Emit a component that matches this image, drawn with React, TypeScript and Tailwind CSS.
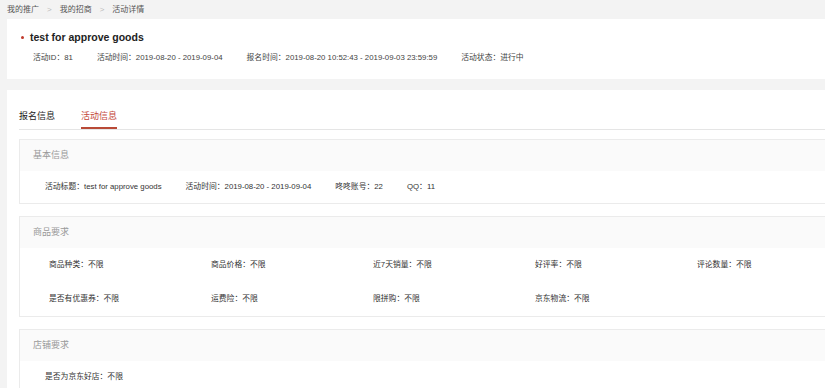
import React from 'react';

const meta = [
  { label: '活动ID', value: '81' },
  { label: '活动时间', value: '2019-08-20 - 2019-09-04' },
  { label: '报名时间', value: '2019-08-20 10:52:43 - 2019-09-03 23:59:59' },
  { label: '活动状态', value: '进行中' },
];

const basic = [
  { label: '活动标题', value: 'test for approve goods' },
  { label: '活动时间', value: '2019-08-20 - 2019-09-04' },
  { label: '咚咚账号', value: '22' },
  { label: 'QQ', value: '11' },
];

const goods = [
  { label: '商品种类', value: '不限' },
  { label: '商品价格', value: '不限' },
  { label: '近7天销量', value: '不限' },
  { label: '好评率', value: '不限' },
  { label: '评论数量', value: '不限' },
  { label: '是否有优惠券', value: '不限' },
  { label: '运费险', value: '不限' },
  { label: '限拼购', value: '不限' },
  { label: '京东物流', value: '不限' },
];

function Section({ title, children }: { title: string; children: React.ReactNode }) {
  return (
    <div className="mb-3 border border-[#ebebeb] bg-white">
      <div className="flex h-[31px] items-center bg-[#fafafa] pl-[13px] text-[9px] text-[#999]">{title}</div>
      {children}
    </div>
  );
}

export default function App() {
  return (
    <div className="h-[388px] w-[825px] overflow-hidden bg-[#f3f3f3] font-['Liberation_Sans','Noto_Sans_CJK_SC',sans-serif]">
      <div className="w-[900px]">
        {/* Breadcrumb */}
        <div className="flex h-[19px] items-center pl-[7px] text-[8px] leading-none text-[#555]">
          <span>我的推广</span>
          <span className="mx-[8px] text-[#bbb]">&gt;</span>
          <span>我的招商</span>
          <span className="mx-[8px] text-[#bbb]">&gt;</span>
          <span>活动详情</span>
        </div>

        {/* Header card */}
        <div className="ml-[7px] h-[60px] bg-white pt-[12px]">
          <div className="flex items-center pl-[14px]">
            <span className="mr-[6px] h-[3px] w-[3px] rounded-full bg-[#c0392b]" />
            <span className="text-[10.5px] font-bold leading-[13px] text-[#222]">test for approve goods</span>
          </div>
          <div className="mt-[8px] flex pl-[26px] text-[7.8px] leading-[12px] text-[#444]">
            {meta.map((m) => (
              <span key={m.label} className="mr-[24px]">
                {m.label}：{m.value}
              </span>
            ))}
          </div>
        </div>

        {/* Detail card */}
        <div className="ml-[7px] mt-[11px] bg-white px-[12px] pt-[20px]">
          <div className="flex border-b border-[#e5e5e5] text-[9px] leading-[12px]">
            <div className="mr-[26px] pb-[7px] text-[#222]">报名信息</div>
            <div className="border-b-2 border-[#b94a37] pb-[5px] text-[#c4463a]">活动信息</div>
          </div>

          <div className="mt-[9px]">
            <Section title="基本信息">
              <div className="flex py-[10px] pl-[25px] text-[7.8px] leading-[12px] text-[#333]">
                {basic.map((b) => (
                  <span key={b.label} className="mr-[24px]">
                    {b.label}：{b.value}
                  </span>
                ))}
              </div>
            </Section>

            <Section title="商品要求">
              <div className="grid grid-cols-[162px_162px_162px_162px_162px] gap-y-[22px] py-[11px] pl-[29px] text-[7.8px] leading-[12px] text-[#333]">
                {goods.map((g) => (
                  <span key={g.label}>
                    {g.label}：{g.value}
                  </span>
                ))}
              </div>
            </Section>

            <Section title="店铺要求">
              <div className="flex py-[10px] pl-[25px] text-[7.8px] leading-[12px] text-[#333]">
                <span>是否为京东好店：不限</span>
              </div>
            </Section>
          </div>
        </div>
      </div>
    </div>
  );
}
